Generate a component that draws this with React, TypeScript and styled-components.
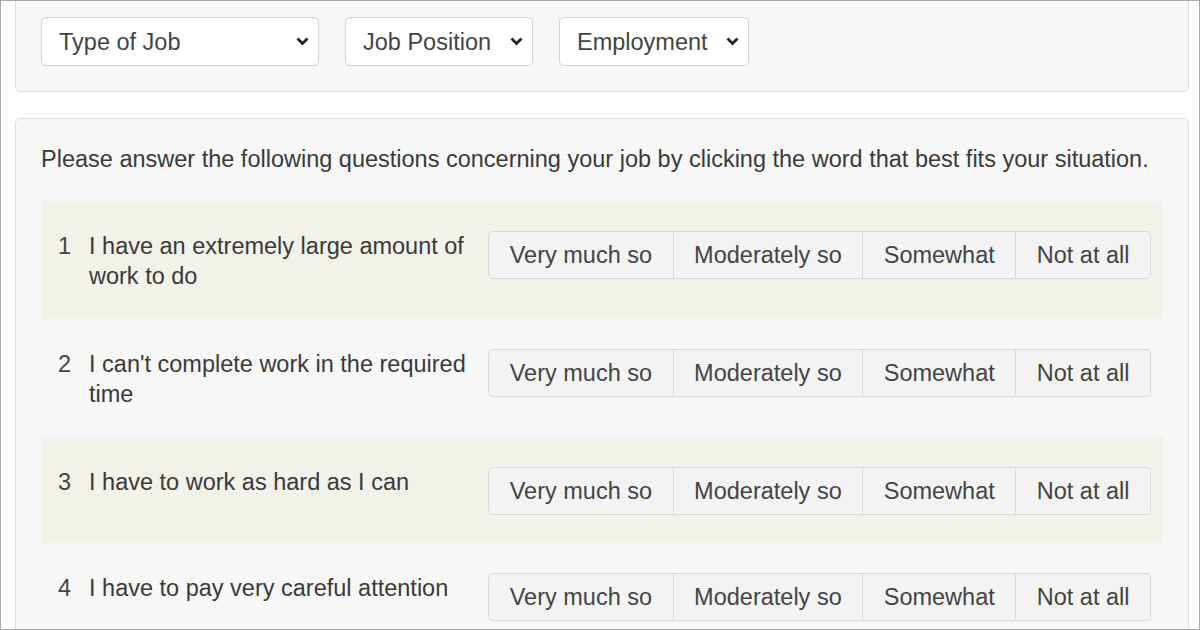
import React from 'react';
import styled, { createGlobalStyle } from 'styled-components';

const FONT = `Arial, "Liberation Sans", Helvetica, sans-serif`;

const GlobalStyle = createGlobalStyle`
  html, body {
    margin: 0;
    padding: 0;
    background: #ffffff;
  }
  body {
    font-family: ${FONT};
    color: #333;
  }
`;

const Frame = styled.div`
  box-sizing: border-box;
  width: 1200px;
  height: 630px;
  border: 1px solid #a8a8a8;
  overflow: hidden;
  padding: 0 10px 0 14px;
  background: #fff;
`;

const Panel = styled.div<{ $first?: boolean }>`
  box-sizing: border-box;
  background: #f7f7f7;
  border: 1px solid #dcdcdc;
  border-radius: 5px;
  padding: 25px;
  margin-top: ${(p) => (p.$first ? '-10px' : '26px')};
`;

const Filters = styled.div`
  display: flex;
  gap: 26px;
`;

const SelectWrap = styled.div<{ $width: number }>`
  position: relative;
  width: ${(p) => p.$width}px;
  height: 49px;
`;

const Select = styled.select`
  appearance: none;
  box-sizing: border-box;
  width: 100%;
  height: 100%;
  border: 1px solid #d2d2d2;
  border-radius: 5px;
  background: #fff;
  padding: 0 40px 0 17px;
  font-family: ${FONT};
  font-size: 23.5px;
  color: #444;
  outline: none;
`;

const Chevron = styled.svg`
  position: absolute;
  right: 10px;
  top: 20px;
  pointer-events: none;
`;

const Intro = styled.p`
  margin: 0 0 27px;
  font-size: 23.5px;
  line-height: 30px;
  color: #3a3a3a;
`;

const Row = styled.div<{ $shaded: boolean }>`
  display: flex;
  align-items: flex-start;
  padding: 30px 12px 28px 17px;
  background: ${(p) => (p.$shaded ? '#f2f1ea' : 'transparent')};
`;

const Num = styled.div`
  width: 31px;
  flex: none;
  font-size: 23.5px;
  line-height: 30px;
  color: #444;
`;

const Question = styled.div`
  width: 390px;
  flex: none;
  font-size: 23.5px;
  line-height: 30px;
  color: #3a3a3a;
`;

const Choices = styled.div`
  display: flex;
  margin-left: auto;
`;

const Choice = styled.button`
  box-sizing: border-box;
  height: 48px;
  padding: 0 20.5px;
  background: #f3f3f3;
  border: 1px solid #dadada;
  border-left-width: 0;
  font-family: ${FONT};
  font-size: 23.5px;
  color: #444;
  cursor: pointer;
  &:first-child {
    border-left-width: 1px;
    border-radius: 5px 0 0 5px;
  }
  &:last-child {
    border-radius: 0 5px 5px 0;
  }
`;

const filters = [
  { label: 'Type of Job', width: 278 },
  { label: 'Job Position', width: 188 },
  { label: 'Employment', width: 190 },
];

const questions = [
  'I have an extremely large amount of work to do',
  "I can't complete work in the required time",
  'I have to work as hard as I can',
  'I have to pay very careful attention',
];

const answers = ['Very much so', 'Moderately so', 'Somewhat', 'Not at all'];

const App: React.FC = () => {
  return (
    <>
      <GlobalStyle />
      <Frame>
        <Panel $first>
          <Filters>
            {filters.map((f) => (
              <SelectWrap key={f.label} $width={f.width}>
                <Select defaultValue="">
                  <option value="">{f.label}</option>
                </Select>
                <Chevron width="13" height="9" viewBox="0 0 13 9">
                  <path d="M1.5 1.5 L6.5 6.5 L11.5 1.5" fill="none" stroke="#222" strokeWidth="2.8" />
                </Chevron>
              </SelectWrap>
            ))}
          </Filters>
        </Panel>
        <Panel>
          <Intro>
            Please answer the following questions concerning your job by clicking the word that best fits your
            situation.
          </Intro>
          {questions.map((q, i) => (
            <Row key={q} $shaded={i % 2 === 0}>
              <Num>{i + 1}</Num>
              <Question>{q}</Question>
              <Choices>
                {answers.map((a) => (
                  <Choice key={a}>{a}</Choice>
                ))}
              </Choices>
            </Row>
          ))}
        </Panel>
      </Frame>
    </>
  );
};

export default App;
